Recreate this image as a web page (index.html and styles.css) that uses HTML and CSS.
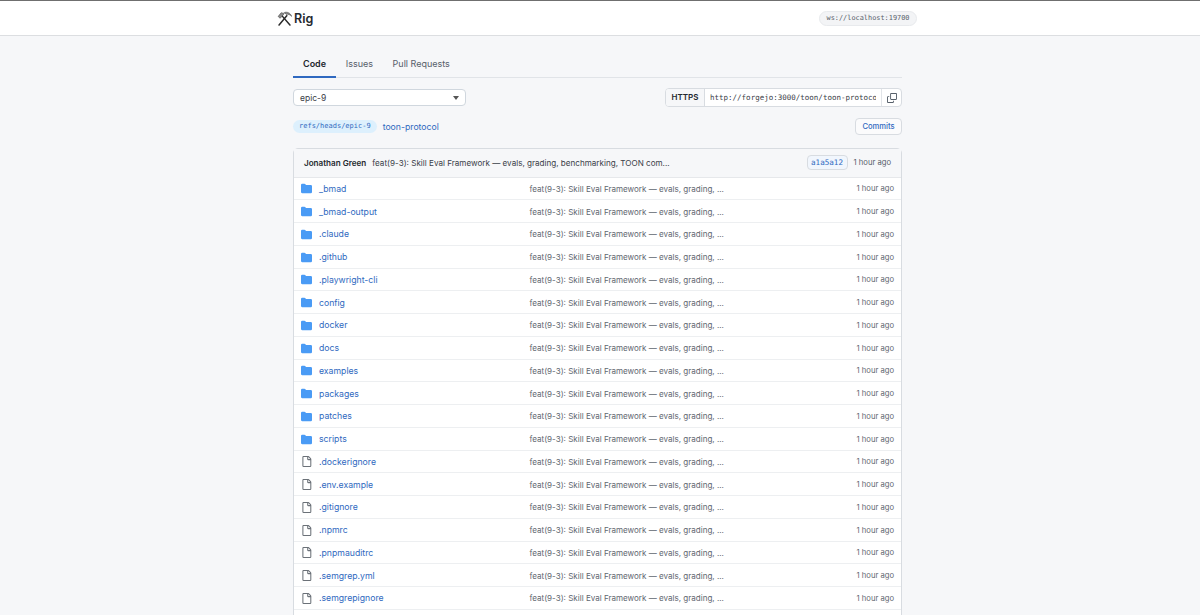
FILE: index.html
```html
<!DOCTYPE html>
<html lang="en">

<head>
    <meta charset="UTF-8">
    <title>Rig</title>
    <link rel="stylesheet" href="styles.css">
</head>

<body>
    <svg class="defs" width="0" height="0">
        <symbol id="folder" viewBox="0 0 16 16">
            <path d="M1.75 1A1.75 1.75 0 0 0 0 2.75v10.5C0 14.22.78 15 1.75 15h12.5A1.75 1.75 0 0 0 16 13.25v-8.5A1.75 1.75 0 0 0 14.25 3H7.5a.25.25 0 0 1-.2-.1l-.9-1.2C6.07 1.26 5.55 1 5 1H1.75Z"/>
        </symbol>
        <symbol id="file" viewBox="0 0 16 16">
            <path d="M2 1.75C2 .784 2.784 0 3.75 0h6.586c.464 0 .909.184 1.237.513l2.914 2.914c.329.328.513.773.513 1.237v9.586A1.75 1.75 0 0 1 13.25 16h-9.5A1.75 1.75 0 0 1 2 14.25Zm1.75-.25a.25.25 0 0 0-.25.25v12.5c0 .138.112.25.25.25h9.5a.25.25 0 0 0 .25-.25V6h-2.75A1.75 1.75 0 0 1 9 4.25V1.5Zm6.75.062V4.25c0 .138.112.25.25.25h2.688l-.011-.013-2.914-2.914-.013-.011Z"/>
        </symbol>
    </svg>

    <!-- top bar -->
    <header class="topbar">
        <div class="brand">
            <svg class="brand-icon" viewBox="0 0 16 16" fill="none" stroke="#2b2b2b">
                <path d="M2.2 15 10.400 5" stroke-width="1.600" stroke-linecap="round"/>
                <path d="M13.800 15 5.400 5.200" stroke-width="1.600" stroke-linecap="round"/>
                <path d="M1.200 5.800 4.400 1.800 7.800 2.600 5.600 5.400 3.400 7.800Z" fill="#8a8a8a" stroke-width=".5"/>
                <path d="M7.800 1.600c3.200-1 6.400.4 8 4.200-2-2-4-2.800-6-2.200Z" fill="#8a8a8a" stroke-width=".5"/>
            </svg>
            <span>Rig</span>
        </div>
        <div class="ws-pill">ws://localhost:19700</div>
    </header>

    <main class="repo">
        <nav class="tabs">
            <a class="tab on" href="#">Code</a>
            <a class="tab" href="#">Issues</a>
            <a class="tab" href="#">Pull Requests</a>
        </nav>

        <div class="toolbar">
            <div class="branch-select">
                <span>epic-9</span>
                <i class="caret"></i>
            </div>
            <div class="clone">
                <span class="clone-proto">HTTPS</span>
                <input class="clone-url" type="text" readonly value="http://forgejo:3000/toon/toon-protocol.git">
                <span class="clone-copy">
                    <svg viewBox="0 0 16 16" width="10" height="10" fill="#57606a">
                        <path d="M0 6.750C0 5.784.784 5 1.750 5h1.500a.750.750 0 0 1 0 1.500h-1.500a.250.250 0 0 0-.250.250v7.500c0 .138.112.250.250.250h7.500a.250.250 0 0 0 .250-.250v-1.500a.750.750 0 0 1 1.500 0v1.500A1.750 1.750 0 0 1 9.250 16h-7.500A1.750 1.750 0 0 1 0 14.250Z"/>
                        <path d="M5 1.750C5 .784 5.784 0 6.750 0h7.500C15.216 0 16 .784 16 1.750v7.500A1.750 1.750 0 0 1 14.250 11h-7.500A1.750 1.750 0 0 1 5 9.250Zm1.750-.250a.250.250 0 0 0-.250.250v7.500c0 .138.112.250.250.250h7.500a.250.250 0 0 0 .250-.250v-7.500a.250.250 0 0 0-.250-.250Z"/>
                    </svg>
                </span>
            </div>
        </div>

        <div class="refbar">
            <span class="ref-pill">refs/heads/epic-9</span>
            <a class="repo-name" href="#">toon-protocol</a>
            <a class="commits-btn" href="#">Commits</a>
        </div>

        <section class="file-box">
            <div class="commit-head">
                <b>Jonathan Green</b>
                <span class="commit-msg">feat(9-3): Skill Eval Framework — evals, grading, benchmarking, TOON com...</span>
                <a class="sha" href="#">a1a5a12</a>
                <span class="commit-time">1 hour ago</span>
            </div>

            <div class="row"><svg class="ico dir"><use href="#folder"/></svg><a href="#">_bmad</a><span class="msg">feat(9-3): Skill Eval Framework — evals, grading, ...</span><span class="time">1 hour ago</span></div>
            <div class="row"><svg class="ico dir"><use href="#folder"/></svg><a href="#">_bmad-output</a><span class="msg">feat(9-3): Skill Eval Framework — evals, grading, ...</span><span class="time">1 hour ago</span></div>
            <div class="row"><svg class="ico dir"><use href="#folder"/></svg><a href="#">.claude</a><span class="msg">feat(9-3): Skill Eval Framework — evals, grading, ...</span><span class="time">1 hour ago</span></div>
            <div class="row"><svg class="ico dir"><use href="#folder"/></svg><a href="#">.github</a><span class="msg">feat(9-3): Skill Eval Framework — evals, grading, ...</span><span class="time">1 hour ago</span></div>
            <div class="row"><svg class="ico dir"><use href="#folder"/></svg><a href="#">.playwright-cli</a><span class="msg">feat(9-3): Skill Eval Framework — evals, grading, ...</span><span class="time">1 hour ago</span></div>
            <div class="row"><svg class="ico dir"><use href="#folder"/></svg><a href="#">config</a><span class="msg">feat(9-3): Skill Eval Framework — evals, grading, ...</span><span class="time">1 hour ago</span></div>
            <div class="row"><svg class="ico dir"><use href="#folder"/></svg><a href="#">docker</a><span class="msg">feat(9-3): Skill Eval Framework — evals, grading, ...</span><span class="time">1 hour ago</span></div>
            <div class="row"><svg class="ico dir"><use href="#folder"/></svg><a href="#">docs</a><span class="msg">feat(9-3): Skill Eval Framework — evals, grading, ...</span><span class="time">1 hour ago</span></div>
            <div class="row"><svg class="ico dir"><use href="#folder"/></svg><a href="#">examples</a><span class="msg">feat(9-3): Skill Eval Framework — evals, grading, ...</span><span class="time">1 hour ago</span></div>
            <div class="row"><svg class="ico dir"><use href="#folder"/></svg><a href="#">packages</a><span class="msg">feat(9-3): Skill Eval Framework — evals, grading, ...</span><span class="time">1 hour ago</span></div>
            <div class="row"><svg class="ico dir"><use href="#folder"/></svg><a href="#">patches</a><span class="msg">feat(9-3): Skill Eval Framework — evals, grading, ...</span><span class="time">1 hour ago</span></div>
            <div class="row"><svg class="ico dir"><use href="#folder"/></svg><a href="#">scripts</a><span class="msg">feat(9-3): Skill Eval Framework — evals, grading, ...</span><span class="time">1 hour ago</span></div>
            <div class="row"><svg class="ico"><use href="#file"/></svg><a href="#">.dockerignore</a><span class="msg">feat(9-3): Skill Eval Framework — evals, grading, ...</span><span class="time">1 hour ago</span></div>
            <div class="row"><svg class="ico"><use href="#file"/></svg><a href="#">.env.example</a><span class="msg">feat(9-3): Skill Eval Framework — evals, grading, ...</span><span class="time">1 hour ago</span></div>
            <div class="row"><svg class="ico"><use href="#file"/></svg><a href="#">.gitignore</a><span class="msg">feat(9-3): Skill Eval Framework — evals, grading, ...</span><span class="time">1 hour ago</span></div>
            <div class="row"><svg class="ico"><use href="#file"/></svg><a href="#">.npmrc</a><span class="msg">feat(9-3): Skill Eval Framework — evals, grading, ...</span><span class="time">1 hour ago</span></div>
            <div class="row"><svg class="ico"><use href="#file"/></svg><a href="#">.pnpmauditrc</a><span class="msg">feat(9-3): Skill Eval Framework — evals, grading, ...</span><span class="time">1 hour ago</span></div>
            <div class="row"><svg class="ico"><use href="#file"/></svg><a href="#">.semgrep.yml</a><span class="msg">feat(9-3): Skill Eval Framework — evals, grading, ...</span><span class="time">1 hour ago</span></div>
            <div class="row"><svg class="ico"><use href="#file"/></svg><a href="#">.semgrepignore</a><span class="msg">feat(9-3): Skill Eval Framework — evals, grading, ...</span><span class="time">1 hour ago</span></div>
            <div class="row"></div>
        </section>
    </main>
</body>

</html>
```

FILE: styles.css
```css
html,
body {
    padding: 0;
    margin: 0;
    height: 615px;
    overflow: hidden;
}

body {
    background-color: #f6f7f9;
    font-family: Inter, "Liberation Sans", sans-serif;
    font-size: 9px;
    color: #24292f;
}

a {
    text-decoration: none;
    color: #2f69c0;
}

.defs {
    position: absolute;
}

/* top bar */

.topbar {
    height: 34px;
    background-color: #fff;
    border-top: 1px solid #6f6f6f;
    border-bottom: 1px solid #dcdee1;
    padding: 0 283px 0 277px;
    display: flex;
    align-items: center;
    justify-content: space-between;
}

.brand {
    display: flex;
    align-items: center;
    gap: 2px;
    font-size: 12.5px;
    font-weight: 600;
    color: #24292f;
}

.brand-icon {
    width: 15px;
    height: 15px;
}

.ws-pill {
    font-family: "DejaVu Sans Mono", monospace;
    font-size: 6.9px;
    line-height: 9px;
    color: #57606a;
    background-color: #f3f4f6;
    border: 1px solid #e8eaed;
    border-radius: 8px;
    padding: 2px 6.5px;
}

/* main column */

.repo {
    width: 609px;
    margin-left: 293px;
}

.tabs {
    display: flex;
    height: 41px;
    align-items: flex-end;
    border-bottom: 1px solid #e1e4e8;
}

.tab {
    padding: 0 9.75px 6px;
    margin-bottom: -1px;
    line-height: 12px;
    color: #57606a;
    border-bottom: 2px solid transparent;
}

.tab.on {
    padding: 0 10px 6px;
    color: #24292f;
    font-weight: 600;
    border-bottom-color: #2f69c0;
}

.toolbar {
    display: flex;
    align-items: center;
    justify-content: space-between;
    margin-top: 10px;
}

.branch-select {
    width: 173px;
    height: 17px;
    box-sizing: border-box;
    background-color: #fff;
    border: 1px solid #d0d7de;
    border-radius: 4px;
    padding: 0 6px;
    display: flex;
    align-items: center;
    justify-content: space-between;
    font-size: 8.5px;
    color: #3a4048;
}

.caret {
    width: 0;
    height: 0;
    border-left: 3.5px solid transparent;
    border-right: 3.5px solid transparent;
    border-top: 4px solid #555;
}

.clone {
    display: flex;
    width: 237px;
    height: 19px;
    box-sizing: border-box;
    border: 1px solid #d8dce1;
    border-radius: 4px;
    overflow: hidden;
    background-color: #fff;
}

.clone-proto {
    width: 38px;
    flex: none;
    text-align: center;
    line-height: 17px;
    font-size: 8px;
    font-weight: 600;
    background-color: #f6f7f9;
    border-right: 1px solid #d8dce1;
}

.clone-url {
    flex: 1;
    min-width: 0;
    border: 0;
    outline: 0;
    background: transparent;
    padding: 0;
    margin: 0 5px;
    font-family: "DejaVu Sans Mono", monospace;
    font-size: 7.5px;
    color: #3a4048;
}

.clone-copy {
    width: 19px;
    flex: none;
    display: flex;
    align-items: center;
    justify-content: center;
    border-left: 1px solid #e1e4e8;
}

.refbar {
    display: flex;
    align-items: center;
    margin-top: 11px;
    height: 17px;
}

.ref-pill {
    font-family: "DejaVu Sans Mono", monospace;
    font-size: 7px;
    line-height: 9px;
    color: #2f69c0;
    background-color: #ddf0fd;
    border-radius: 7px;
    padding: 2px 6px;
}

.repo-name {
    margin-left: 6px;
    font-size: 8.7px;
}

.commits-btn {
    margin-left: auto;
    width: 47px;
    height: 17px;
    box-sizing: border-box;
    border: 1px solid #d8dce1;
    border-radius: 4px;
    text-align: center;
    line-height: 15px;
    font-size: 7.6px;
    font-weight: 500;
    background-color: #fbfbfc;
}

/* file list */

.file-box {
    margin-top: 13px;
    background-color: #fff;
    border: 1px solid #d8dce1;
    border-radius: 5px 5px 0 0;
}

.commit-head {
    height: 28.5px;
    box-sizing: border-box;
    padding: 0 10px;
    background-color: #f6f7f9;
    border-bottom: 1px solid #e6e8eb;
    display: flex;
    align-items: center;
    font-size: 8.1px;
}

.commit-head b {
    font-weight: 600;
    margin-right: 6px;
}

.commit-msg {
    flex: 1;
    color: #3a4048;
    white-space: nowrap;
}

.sha {
    font-family: "DejaVu Sans Mono", monospace;
    font-size: 7.6px;
    border: 1px solid #d8dce1;
    border-radius: 4px;
    background-color: #f1f6fd;
    padding: 2px 3.5px;
}

.commit-time {
    margin-left: 6px;
    color: #57606a;
    font-size: 7.65px;
}

.row {
    height: 22.75px;
    box-sizing: border-box;
    padding: 1px 7px 0;
    border-bottom: 1px solid #edeff1;
    display: flex;
    align-items: center;
    font-size: 8.05px;
    color: #5f6770;
}

.row a {
    width: 210.5px;
    flex: none;
    font-size: 8.7px;
}

.ico {
    width: 11px;
    height: 11px;
    flex: none;
    margin-right: 7px;
    fill: #6b7178;
}

.ico.dir {
    fill: #4a9bf5;
}

.row .msg {
    flex: 1;
    white-space: nowrap;
}

.row .time {
    font-size: 7.65px;
}
```
